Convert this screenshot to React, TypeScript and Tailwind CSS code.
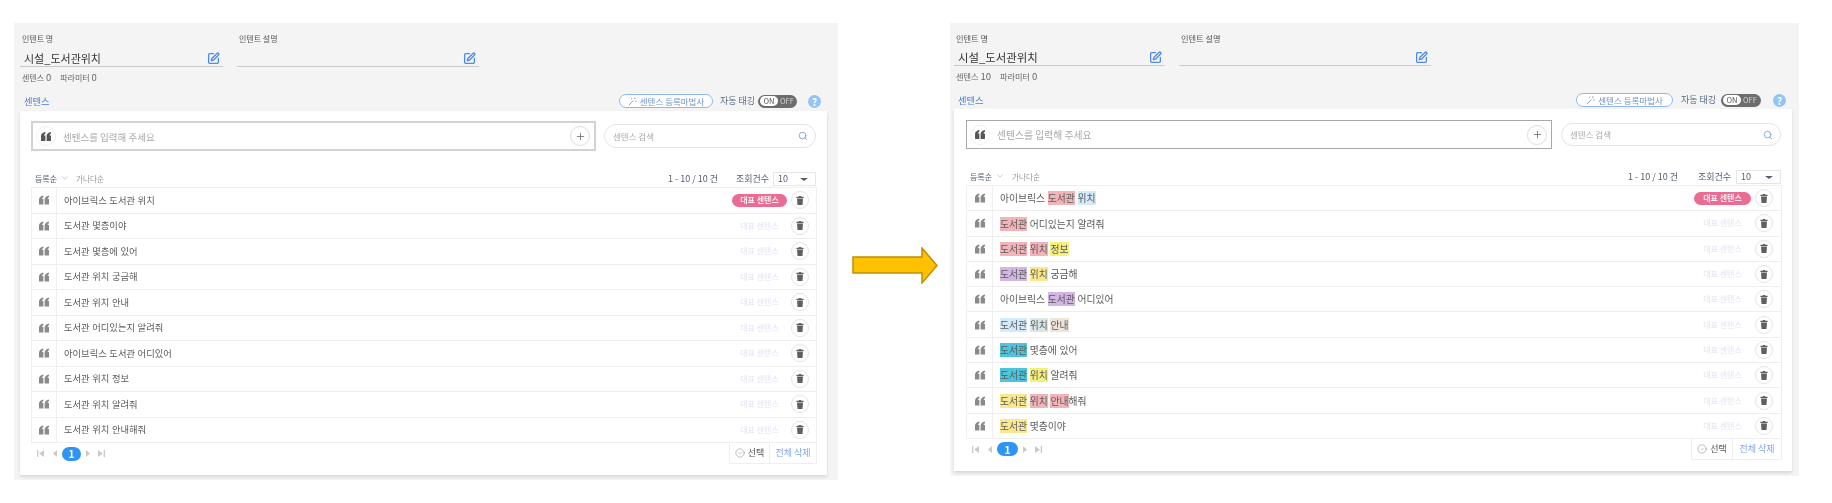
import { CheckCircle2, Plus, Search, SquarePen } from "lucide-react";
import type { ReactNode } from "react";

type Segment = string | [string, string];

const PINK = "bg-[#f3b4b9]";
const SKY = "bg-[#d3eafa]";
const LEMON = "bg-[#f6f07e]";
const PURPLE = "bg-[#d3b6e3]";
const AMBER = "bg-[#fae88e]";
const MIST = "bg-[#d9e8e6]";
const BEIGE = "bg-[#efe4dc]";
const CYAN = "bg-[#4cc5dc]";

const beforeRows: Segment[][] = [
  ["아이브릭스 도서관 위치"],
  ["도서관 몇층이야"],
  ["도서관 몇층에 있어"],
  ["도서관 위치 궁금해"],
  ["도서관 위치 안내"],
  ["도서관 어디있는지 알려줘"],
  ["아이브릭스 도서관 어디있어"],
  ["도서관 위치 정보"],
  ["도서관 위치 알려줘"],
  ["도서관 위치 안내해줘"],
];

const afterRows: Segment[][] = [
  ["아이브릭스 ", ["도서관", PINK], " ", ["위치", SKY]],
  [["도서관", PINK], " 어디있는지 알려줘"],
  [["도서관", PINK], " ", ["위치", PINK], " ", ["정보", LEMON]],
  [["도서관", PURPLE], " ", ["위치", AMBER], " 궁금해"],
  ["아이브릭스 ", ["도서관", PURPLE], " 어디있어"],
  [["도서관", SKY], " ", ["위치", MIST], " ", ["안내", BEIGE]],
  [["도서관", CYAN], " 몇층에 있어"],
  [["도서관", CYAN], " ", ["위치", LEMON], " 알려줘"],
  [["도서관", AMBER], " ", ["위치", PINK], " ", ["안내", PINK], "해줘"],
  [["도서관", AMBER], " 몇층이야"],
];

const beforeSizes = {
  panel: "w-[824px] h-[457px] pt-[10px]",
  header: "pl-[6px]",
  stats: "pl-[8px]",
  nameField: "w-[203px]",
  descField: "w-[242px]",
  labelText: "text-[8px]",
  nameText: "text-[11px] pl-[4px]",
  sentences: "0",
  sectionRow: "mt-[10px] pl-[10px] pr-[17px] mb-[3px]",
  wizard: "w-[94px]",
  autoGap: "ml-[7px] w-[34px]",
  toggle: "w-[39px] ml-[4px]",
  help: "ml-[11px]",
  card: "ml-[6px] mr-[11px] pl-[11px] pr-[10px] pt-[10px] h-[364px]",
  inputRow: "h-[30px]",
  input: "w-[565px] border-2 border-[#d2d2d2]",
  inputText: "text-[9.5px]",
  search: "w-[212px] ml-[8px] h-[24px]",
  sortRow: "mt-[21px] h-[15px] pl-[4px]",
  sort: "w-[27px]",
  chevron: "w-[14px]",
  info: "w-[51px]",
  view: "ml-[17px] w-[33px]",
  select: "w-[43px] mr-[1px]",
  row: "h-[25.5px] pr-[7px]",
  rowText: "text-[9.3px] pl-[7px]",
  quoteCell: "w-[25px]",
  badge: "w-[55px]",
  pager: "pl-[6px]",
  pagePill: "w-[19px]",
  footBtn: "w-[40px]",
  footAll: "w-[46px]",
};

const afterSizes = {
  panel: "w-[849px] h-[453px] pt-[9px]",
  header: "pl-[4px]",
  stats: "pl-[6px]",
  nameField: "w-[211px]",
  descField: "w-[252px]",
  labelText: "text-[8.2px]",
  nameText: "text-[11.4px] pl-[4px]",
  sentences: "10",
  sectionRow: "mt-[10px] pl-[8px] pr-[13px] mb-[2px]",
  wizard: "w-[97px]",
  autoGap: "ml-[8px] w-[35px]",
  toggle: "w-[40px] ml-[5px]",
  help: "ml-[12px]",
  card: "ml-[4px] mr-[7px] pl-[12px] pr-[10px] pt-[11px] h-[362px]",
  inputRow: "h-[29px]",
  input: "w-[586px] border border-[#a8a8a8]",
  inputText: "text-[9.8px]",
  search: "w-[220px] ml-[9px] h-[23px]",
  sortRow: "mt-[21px] h-[15px] pl-[4px]",
  sort: "w-[27px]",
  chevron: "w-[15px]",
  info: "w-[53px]",
  view: "ml-[17px] w-[34px]",
  select: "w-[45px] mr-[1px]",
  row: "h-[25.3px] pr-[8px]",
  rowText: "text-[9.8px] pl-[7px]",
  quoteCell: "w-[26px]",
  badge: "w-[57px]",
  pager: "pl-[6px]",
  pagePill: "w-[21px]",
  footBtn: "w-[41px]",
  footAll: "w-[48px]",
};

function QuoteIcon({ className }: { className: string }) {
  return (
    <svg viewBox="0 0 11 10" className={className} fill="currentColor">
      <path d="M0 10V4.5C0 2.2 1.8 0.6 4.8 0V2C3.9 2.3 3.4 2.9 3.4 3.8H4.8V10Z" />
      <path d="M6.2 10V4.5C6.2 2.2 8 0.6 11 0V2C10.1 2.3 9.6 2.9 9.6 3.8H11V10Z" />
    </svg>
  );
}

function WandIcon() {
  return (
    <svg viewBox="0 0 9 9" className="h-[9px] w-[9px]" fill="none" stroke="#8a9bb5" strokeWidth={0.9}>
      <path d="M0.8 8.2L5.4 3.6" />
      <path d="M6.8 0.4V2M6 1.2H7.6M8 3.6V4.8M7.4 4.2H8.6M3.6 0.8V1.8M3.1 1.3H4.1" strokeWidth={0.6} />
    </svg>
  );
}

function TrashButton() {
  return (
    <span className="flex h-[18px] w-[18px] shrink-0 items-center justify-center rounded-full border border-[#e4e4e4] bg-white">
      <svg viewBox="0 0 8 9" className="h-[9px] w-[8px]" fill="#606060">
        <path d="M2.8 0H5.2V0.8H7.6V1.9H0.4V0.8H2.8Z" />
        <path d="M1 2.5H7L6.5 9H1.5Z" />
      </svg>
    </span>
  );
}

function PageArrow({ dir, edge }: { dir: "left" | "right"; edge?: boolean }) {
  return (
    <svg viewBox="0 0 8 7" preserveAspectRatio="none" className={edge ? "h-[7px] w-[7px]" : "h-[7px] w-[4px]"} fill="#c9c9c9">
      {edge ? (
        dir === "left" ? (
          <path d="M0 0H1.5V7H0ZM8 0V7L2.5 3.5Z" />
        ) : (
          <path d="M8 0H6.5V7H8ZM0 0V7L5.5 3.5Z" />
        )
      ) : dir === "left" ? (
        <path d="M8 0V7L0 3.5Z" />
      ) : (
        <path d="M0 0V7L8 3.5Z" />
      )}
    </svg>
  );
}

function Field({ label, width, labelText, nameText, children }: { label: string; width: string; labelText: string; nameText: string; children?: ReactNode }) {
  return (
    <div className={width}>
      <div className={`h-[12px] pl-[2px] leading-[12px] text-[#555555] ${labelText}`}>{label}</div>
      <div className="flex h-[22px] items-end justify-between border-b border-[#c9c9c9] pr-[3px]">
        <span className={`leading-[16px] text-[#333333] ${nameText}`}>{children}</span>
        <SquarePen className="mb-[1px] h-[13px] w-[13px] text-[#4f8ae6]" strokeWidth={2.4} />
      </div>
    </div>
  );
}

function Panel({ s, rows }: { s: typeof beforeSizes; rows: Segment[][] }) {
  return (
    <section className={`shrink-0 bg-[#f4f4f4] ${s.panel}`}>
      <div className={`flex gap-[14px] ${s.header}`}>
        <Field label="인텐트 명" width={s.nameField} labelText={s.labelText} nameText={s.nameText}>
          시설_도서관위치
        </Field>
        <Field label="인텐트 설명" width={s.descField} labelText={s.labelText} nameText={s.nameText} />
      </div>
      <div className={`mt-[3px] flex h-[14px] items-center gap-[9px] text-[#666666] ${s.stats} ${s.labelText}`}>
        <span>
          센텐스 <span className="text-[9.5px]">{s.sentences}</span>
        </span>
        <span>
          파라미터 <span className="text-[9.5px]">0</span>
        </span>
      </div>

      <div className={`flex h-[14px] items-center ${s.sectionRow}`}>
        <span className="pt-[2px] text-[9.3px] text-[#4f7fd0]">센텐스</span>
        <div className="ml-auto flex items-center">
          <span className={`flex h-[14px] items-center justify-center gap-[3px] rounded-full border border-[#8db9ee] bg-white text-[8.5px] text-[#6f94c8] ${s.wizard}`}>
            <WandIcon />
            센텐스 등록마법사
          </span>
          <span className={`whitespace-nowrap text-[9px] text-[#5b6b85] ${s.autoGap}`}>자동 태깅</span>
          <span className={`flex h-[13px] items-center rounded-full bg-[#6c6c6c] pl-[2px] text-[7.5px] ${s.toggle}`}>
            <span className="flex h-[10px] w-[18px] items-center justify-center rounded-full bg-white text-[#555555]">ON</span>
            <span className="ml-[2px] text-[#d5d5d5]">OFF</span>
          </span>
          <span className={`flex h-[13px] w-[13px] items-center justify-center rounded-full bg-[#92c5f5] text-[10px] font-bold text-white ${s.help}`}>?</span>
        </div>
      </div>

      <div className={`bg-white shadow-[0_2px_3px_rgba(0,0,0,0.12)] ${s.card}`}>
        <div className={`flex items-center ${s.inputRow}`}>
          <div className={`flex h-full items-center pl-[3px] pr-[4px] ${s.input}`}>
            <span className="flex h-[20px] w-[20px] items-center justify-center rounded-full border border-[#f0f0f0]">
              <QuoteIcon className="h-[9px] w-[10px] text-[#555555]" />
            </span>
            <span className={`ml-[7px] pt-[2px] text-[#a9a9a9] ${s.inputText}`}>센텐스를 입력해 주세요</span>
            <span className="ml-auto flex h-[20px] w-[20px] items-center justify-center rounded-full border border-[#dddddd]">
              <Plus className="h-[11px] w-[11px] text-[#555555]" strokeWidth={1.5} />
            </span>
          </div>
          <div className={`flex items-center rounded-full border border-[#e4e4e4] pl-[8px] pr-[7px] ${s.search}`}>
            <span className="text-[8.5px] text-[#aaaaaa]">센텐스 검색</span>
            <Search className="ml-auto h-[10px] w-[10px] text-[#6d9fe0]" strokeWidth={2} />
          </div>
        </div>

        <div className={`flex items-start ${s.sortRow}`}>
          <span className={`text-[8px] leading-[13px] text-[#556070] ${s.sort}`}>등록순</span>
          <span className={`text-[#a9c3e6] ${s.chevron}`}>
            <svg viewBox="0 0 6 4" className="mt-[4px] h-[4px] w-[6px]" fill="none" stroke="currentColor" strokeWidth={0.8}>
              <path d="M0.4 0.4L3 3.2L5.6 0.4" />
            </svg>
          </span>
          <span className="text-[7.6px] leading-[13px] text-[#999999]">가나다순</span>
          <div className="ml-auto flex items-start text-[#556070]">
            <span className={`whitespace-nowrap text-[9px] leading-[13px] ${s.info}`}>1 - 10 / 10 건</span>
            <span className={`whitespace-nowrap text-[9px] leading-[13px] ${s.view}`}>조회건수</span>
            <span className={`ml-[4px] flex h-[14px] items-center justify-between border border-[#e6e6e6] pl-[4px] pr-[7px] text-[9px] ${s.select}`}>
              10
              <span className="h-0 w-0 border-x-[4px] border-t-[3px] border-x-transparent border-t-[#556070]" />
            </span>
          </div>
        </div>

        <div className="border-x border-t border-[#efefef]">
          {rows.map((segments, i) => (
            <div key={i} className={`flex items-stretch border-b border-[#efefef] ${s.row}`}>
              <span className={`flex shrink-0 items-center justify-center border-r border-[#efefef] ${s.quoteCell}`}>
                <QuoteIcon className="h-[10px] w-[10px] text-[#8a8a8a]" />
              </span>
              <span className={`flex items-center whitespace-pre text-[#5a5a5a] [word-spacing:0.5px] ${s.rowText}`}>
                <span className="pt-[1px]">
                  {segments.map((seg, j) =>
                    typeof seg === "string" ? (
                      <span key={j}>{seg}</span>
                    ) : (
                      <span key={j} className={`inline-block h-[14px] leading-[14px] ${seg[1]}`}>
                        {seg[0]}
                      </span>
                    ),
                  )}
                </span>
              </span>
              <span className="ml-auto flex items-center gap-[4px]">
                <span
                  className={
                    i === 0
                      ? `flex h-[13px] items-center justify-center rounded-full bg-[#ea6c92] text-[8px] font-medium text-white ${s.badge}`
                      : `flex h-[13px] items-center justify-center text-[8px] text-[#e3e3f2] ${s.badge}`
                  }
                >
                  대표 센텐스
                </span>
                <TrashButton />
              </span>
            </div>
          ))}
        </div>

        <div className="flex h-[21px] items-stretch">
          <div className={`flex items-center gap-[5px] ${s.pager}`}>
            <PageArrow dir="left" edge />
            <span className="ml-[4px]">
              <PageArrow dir="left" />
            </span>
            <span className={`flex h-[14px] items-center justify-center rounded-full bg-[#2f95f5] text-[10px] font-semibold text-white ${s.pagePill}`}>1</span>
            <PageArrow dir="right" />
            <span className="ml-[3px]">
              <PageArrow dir="right" edge />
            </span>
          </div>
          <div className="ml-auto flex border-x border-b border-[#efefef] text-[9px]">
            <span className={`flex items-center justify-center gap-[3px] border-r border-[#efefef] text-[#555555] ${s.footBtn}`}>
              <CheckCircle2 className="h-[10px] w-[10px] text-[#888888]" strokeWidth={1.3} />
              선택
            </span>
            <span className={`flex items-center justify-center text-[#7fa6e6] ${s.footAll}`}>전체 삭제</span>
          </div>
        </div>
      </div>
    </section>
  );
}

export default function App() {
  return (
    <div className="flex h-[503px] w-[1832px] items-start overflow-hidden bg-white pl-[14px] pt-[23px] blur-[0.35px] [font-family:'Noto_Sans_CJK_KR','Noto_Sans',sans-serif]">
      <Panel s={beforeSizes} rows={beforeRows} />
      <svg viewBox="0 0 86 37" className="ml-[14px] mr-[12px] mt-[224px] h-[37px] w-[86px] shrink-0">
        <path d="M1 10H70V1L85 18.5L70 36V26H1Z" fill="#ffc000" stroke="#bf9000" strokeWidth={1.5} />
      </svg>
      <Panel s={afterSizes} rows={afterRows} />
    </div>
  );
}
